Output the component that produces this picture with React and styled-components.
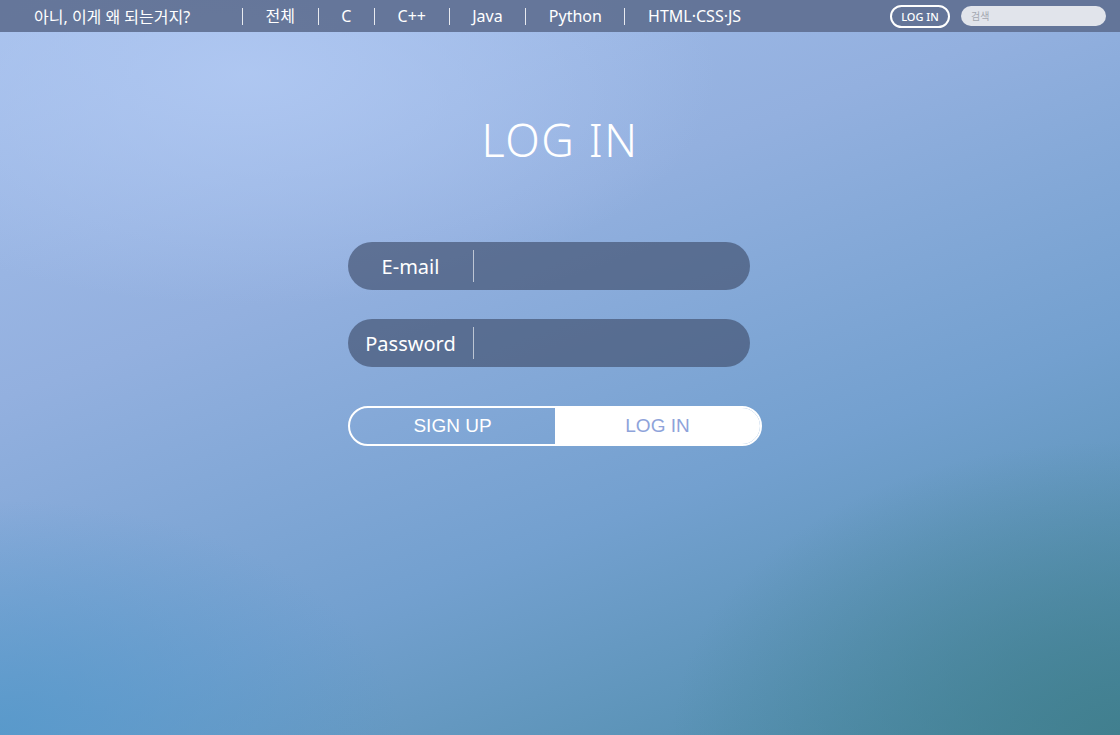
import styled, { createGlobalStyle } from "styled-components";

const GlobalStyle = createGlobalStyle`
  html, body {
    margin: 0;
    padding: 0;
    height: 100%;
  }
  body {
    font-family: "Noto Sans", "Noto Sans CJK KR", sans-serif;
  }
  #root {
    min-height: 100vh;
  }
`;

const menus = ["전체", "C", "C++", "Java", "Python", "HTML·CSS·JS"];

export default function App() {
  return (
    <>
      <GlobalStyle />
      <Page>
        <NavBar>
          <Brand>아니, 이게 왜 되는거지?</Brand>
          <Menu>
            {menus.map((m) => (
              <MenuItem key={m}>{m}</MenuItem>
            ))}
          </Menu>
          <NavRight>
            <NavLogin>LOG IN</NavLogin>
            <Search placeholder="검색" />
          </NavRight>
        </NavBar>
        <Main>
          <Title>LOG IN</Title>
          <Form>
            <Field>
              <FieldLabel>E-mail</FieldLabel>
              <FieldInput type="text" />
            </Field>
            <Field>
              <FieldLabel>Password</FieldLabel>
              <FieldInput type="password" />
            </Field>
            <ButtonRow>
              <ActionButton>SIGN UP</ActionButton>
              <ActionButton primary>LOG IN</ActionButton>
            </ButtonRow>
          </Form>
        </Main>
      </Page>
    </>
  );
}

const Page = styled.div`
  min-height: 100vh;
  display: flex;
  flex-direction: column;
  background:
    radial-gradient(ellipse 60% 45% at 22% 10%, rgba(176, 200, 242, 0.9), rgba(176, 200, 242, 0) 70%),
    radial-gradient(ellipse 50% 50% at 100% 100%, rgba(64, 126, 140, 0.9), rgba(64, 126, 140, 0) 80%),
    radial-gradient(ellipse 45% 40% at 0% 100%, rgba(84, 152, 202, 0.85), rgba(84, 152, 202, 0) 80%),
    linear-gradient(160deg, #a6c0ec 0%, #93b0df 35%, #73a0cf 65%, #4a8aa6 100%);
`;

const NavBar = styled.header`
  height: 32px;
  display: flex;
  align-items: center;
  background-color: rgba(96, 112, 146, 0.92);
  color: #fff;
  font-size: 16px;
`;

const Brand = styled.div`
  padding-left: 34px;
  width: 242px;
  flex-shrink: 0;
  box-sizing: border-box;
  white-space: nowrap;
`;

const Menu = styled.nav`
  display: flex;
  align-items: center;
`;

const MenuItem = styled.a`
  padding: 0 22.6px;
  line-height: 17px;
  border-left: 1px solid rgba(255, 255, 255, 0.85);
  white-space: nowrap;
  cursor: pointer;
`;

const NavRight = styled.div`
  margin-left: auto;
  margin-right: 14px;
  display: flex;
  align-items: center;
  gap: 11px;
`;

const NavLogin = styled.button`
  width: 60px;
  height: 23px;
  border: 2px solid #fff;
  border-radius: 12px;
  background: transparent;
  color: #fff;
  font-family: inherit;
  font-size: 11px;
  font-weight: 500;
  padding: 0;
  cursor: pointer;
`;

const Search = styled.input`
  width: 145px;
  height: 20px;
  box-sizing: border-box;
  border: none;
  border-radius: 10px;
  background-color: #e1e4eb;
  padding: 0 10px;
  font-family: inherit;
  font-size: 10px;
  outline: none;

  &::placeholder {
    color: #a3a7b0;
  }
`;

const Main = styled.main`
  display: flex;
  flex-direction: column;
  align-items: center;
  padding-top: 77px;
`;

const Title = styled.h1`
  margin: 0;
  font-size: 45px;
  font-weight: 300;
  color: #fff;
  letter-spacing: 1.5px;
`;

const Form = styled.div`
  margin-top: 72px;
  margin-right: 10px;
  width: 414px;
  display: flex;
  flex-direction: column;
  gap: 29px;
`;

const Field = styled.div`
  width: 402px;
  height: 48px;
  border-radius: 24px;
  background-color: rgba(68, 84, 116, 0.7);
  display: flex;
  align-items: center;
`;

const FieldLabel = styled.label`
  width: 126px;
  height: 32px;
  flex-shrink: 0;
  display: flex;
  align-items: center;
  justify-content: center;
  border-right: 1px solid rgba(255, 255, 255, 0.6);
  color: #fff;
  font-size: 20px;
  box-sizing: border-box;
`;

const FieldInput = styled.input`
  flex: 1;
  min-width: 0;
  height: 100%;
  border: none;
  background: transparent;
  color: #fff;
  padding: 0 16px;
  font-family: inherit;
  font-size: 18px;
  outline: none;
`;

const ButtonRow = styled.div`
  margin-top: 10px;
  height: 40px;
  display: flex;
  border: 2px solid #fff;
  border-radius: 20px;
  overflow: hidden;
  box-sizing: border-box;
`;

const ActionButton = styled.button`
  flex: 1;
  border: none;
  padding: 0;
  background-color: ${(p) => (p.primary ? "#fff" : "transparent")};
  color: ${(p) => (p.primary ? "#8ea3da" : "#fff")};
  font-family: "Liberation Sans", "Noto Sans", sans-serif;
  font-size: 19px;
  cursor: pointer;
`;
